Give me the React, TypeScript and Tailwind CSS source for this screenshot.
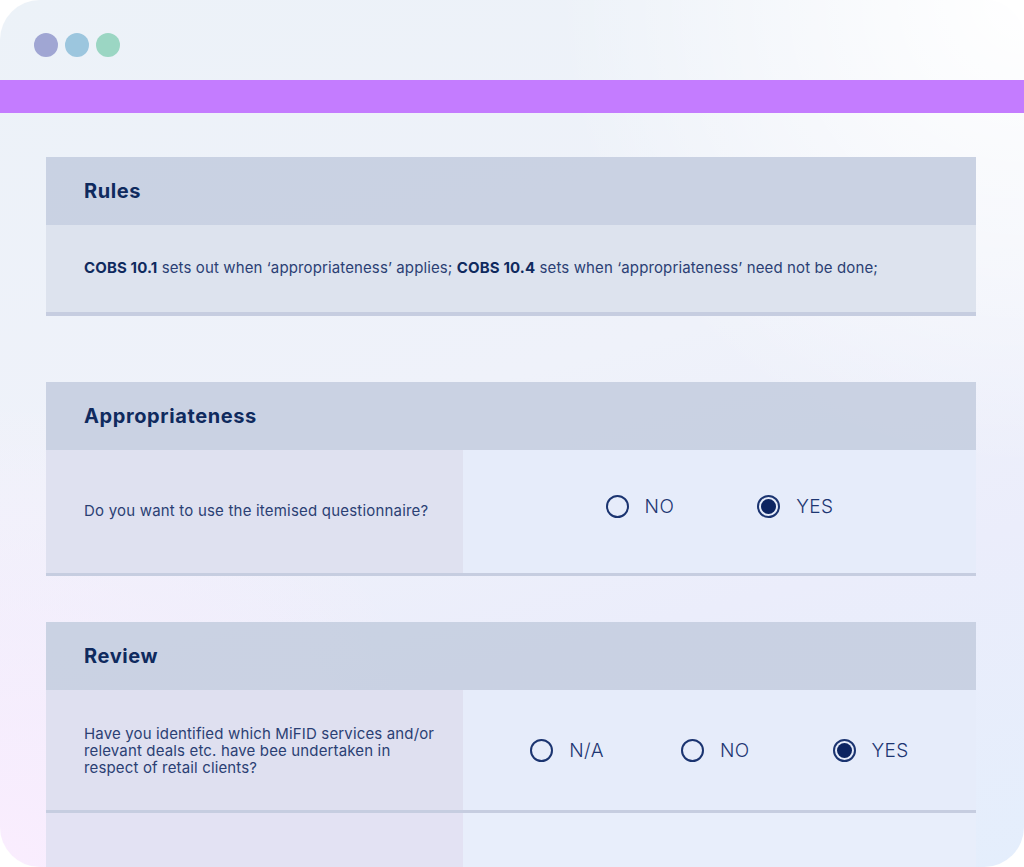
import React from "react";

const font = { fontFamily: "Inter, 'Noto Sans', sans-serif" };

function Radio({ label, checked, className = "" }: { label: string; checked?: boolean; className?: string }) {
  return (
    <div className={`flex items-center gap-[16px] ${className}`}>
      <span className="flex h-[23px] w-[23px] items-center justify-center rounded-full border-2 border-[#1b3470]">
        {checked && <span className="h-[15px] w-[15px] rounded-full bg-[#0c2461]" />}
      </span>
      <span className="text-[19px] font-light leading-none tracking-[0.4px] text-[#1d3672]">{label}</span>
    </div>
  );
}

function CardHeader({ title }: { title: string }) {
  return (
    <div className="flex h-[68px] items-center bg-[#c7d0e2]/95 px-[38px]">
      <h2 className="text-[20px] font-bold tracking-[0.6px] text-[#0f2a5e]">{title}</h2>
    </div>
  );
}

export default function App() {
  return (
    <div className="h-[867px] w-[1024px] bg-white" style={font}>
      <div className="flex h-full w-full flex-col overflow-hidden rounded-[40px] bg-[image:radial-gradient(circle_at_0%_100%,#faedfe_0%,transparent_35%),radial-gradient(circle_at_100%_0%,#ffffff_0%,transparent_35%),linear-gradient(165deg,#ecf2f8_0%,#eff2fa_45%,#ebedfb_70%,#e4eefc_100%)]">
        {/* window dots */}
        <div className="flex h-[80px] shrink-0 items-center gap-[7px] pl-[34px] pt-[10px]">
          <span className="h-[24px] w-[24px] rounded-full bg-[#a0a6d3]" />
          <span className="h-[24px] w-[24px] rounded-full bg-[#9cc6de]" />
          <span className="h-[24px] w-[24px] rounded-full bg-[#9bd6c3]" />
        </div>
        <div className="h-[33px] shrink-0 bg-[#c47cff]" />

        <div className="flex flex-col px-[46px] pr-[48px] pt-[44px]">
          {/* Rules */}
          <section className="border-b-4 border-[#c6cde0]">
            <CardHeader title="Rules" />
            <div className="flex h-[87px] items-center bg-[#dde3ee] px-[38px]">
              <p className="text-[15px] tracking-[0.12px] text-[#2b3f74]">
                <b className="font-bold text-[#0f2a5e]">COBS 10.1</b> sets out when ‘appropriateness’ applies;{" "}
                <b className="font-bold text-[#0f2a5e]">COBS 10.4</b> sets when ‘appropriateness’ need not be done;
              </p>
            </div>
          </section>

          {/* Appropriateness */}
          <section className="mt-[66px] border-b-[3px] border-[#c6cde0]">
            <CardHeader title="Appropriateness" />
            <div className="flex h-[123px]">
              <div className="flex w-[417px] items-center bg-[#dfe1f0] pl-[38px] pr-[20px]">
                <p className="text-[15px] tracking-[0.2px] text-[#2b3f74]">Do you want to use the itemised questionnaire?</p>
              </div>
              <div className="flex flex-1 items-center justify-center bg-[#e6ecfa] pb-[10px]">
                <Radio label="NO" />
                <Radio label="YES" checked className="ml-[83px]" />
              </div>
            </div>
          </section>

          {/* Review */}
          <section className="mt-[46px]">
            <CardHeader title="Review" />
            <div className="flex h-[123px] border-b-[3px] border-[#c6cde0]">
              <div className="flex w-[417px] items-center bg-[#dfe0f0] pl-[38px] pr-[20px]">
                <p className="text-[15px] leading-[17px] tracking-[0.15px] text-[#2b3f74]">
                  Have you identified which MiFID services and/or relevant deals etc. have bee undertaken in respect of retail clients?
                </p>
              </div>
              <div className="flex flex-1 items-center justify-center bg-[#e6ecfa]">
                <Radio label="N/A" />
                <Radio label="NO" className="ml-[77px]" />
                <Radio label="YES" checked className="ml-[83px]" />
              </div>
            </div>
            <div className="flex h-[60px]">
              <div className="w-[417px] bg-[#e3e2f3]" />
              <div className="flex-1 bg-[#e8eefb]" />
            </div>
          </section>
        </div>
      </div>
    </div>
  );
}
